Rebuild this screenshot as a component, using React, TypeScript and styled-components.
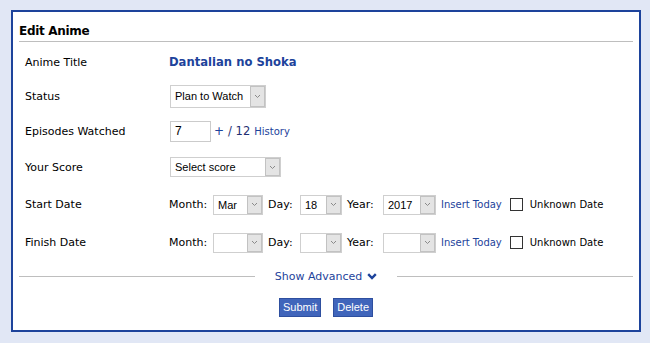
import React from 'react'
import styled, { createGlobalStyle } from 'styled-components'

const GlobalStyle = createGlobalStyle`
  html, body {
    margin: 0;
    padding: 0;
    background: #e1e7f5;
  }
  body {
    font-family: "DejaVu Sans", Verdana, sans-serif;
    color: #000;
  }
`

const Page = styled.div`
  padding: 10px 0 0 11px;
  width: 630px;
`

const Card = styled.div`
  background: #fff;
  border: 2px solid #1d439b;
  width: 614px;
  height: 318px;
  padding: 0 6px;
  box-sizing: content-box;
`

const Header = styled.div`
  font-weight: bold;
  font-size: 12px;
  line-height: 16px;
  padding: 11px 0 2px 0;
  border-bottom: 1px solid #bebebe;
  letter-spacing: -0.3px;
`

const Form = styled.div`
  margin-top: 3px;
  padding-left: 6px;
`

const Row = styled.div<{ $h: number }>`
  display: grid;
  grid-template-columns: 144px 1fr;
  align-items: center;
  height: ${p => p.$h}px;
`

const Label = styled.div`
  font-size: 11px;
`

const Value = styled.div`
  display: flex;
  align-items: center;
  font-size: 11px;
`

const Title = styled.a`
  font-weight: bold;
  font-size: 11.6px;
  color: #1d439b;
  text-decoration: none;
`

const SelectBox = styled.div<{ $w: number; $h: number }>`
  display: flex;
  align-items: stretch;
  box-sizing: border-box;
  width: ${p => p.$w}px;
  height: ${p => p.$h}px;
  border: 1px solid #cfcfcf;
  background: #fff;
  margin-left: 1px;
`

const SelectText = styled.span`
  flex: 1;
  display: flex;
  align-items: center;
  padding-left: 4px;
  font-family: "Liberation Sans", Arial, sans-serif;
  font-size: 11px;
  color: #000;
`

const Arrow = styled.span`
  width: 15px;
  box-sizing: border-box;
  border: 1px solid #c2c2c2;
  background: #e4e4e4;
  display: flex;
  align-items: center;
  justify-content: center;
`

const TextInput = styled.div`
  box-sizing: border-box;
  width: 41px;
  height: 21px;
  border: 1px solid #cbcbcb;
  display: flex;
  align-items: center;
  padding-left: 4px;
  font-family: "Liberation Sans", Arial, sans-serif;
  font-size: 12px;
  margin-left: 1px;
`

const Plus = styled.a`
  color: #1d439b;
  font-size: 12px;
  margin-left: 3px;
  text-decoration: none;
`

const Total = styled.span`
  color: #1f2f72;
  font-size: 11.5px;
  margin-left: 4px;
`

const SmallLink = styled.a<{ $ml?: number }>`
  color: #1d439b;
  font-size: 10px;
  text-decoration: none;
  margin-left: ${p => p.$ml ?? 0}px;
`

const DateLabel = styled.span<{ $w: number }>`
  width: ${p => p.$w}px;
  font-size: 11px;
`

const DateSelect = styled(SelectBox)`
  margin: 0 5px 0 0;
`

const Check = styled.span`
  box-sizing: border-box;
  width: 13px;
  height: 13px;
  border: 1px solid #333;
  background: #fff;
  margin-left: 8px;
`

const CheckLabel = styled.span`
  font-size: 10px;
  margin-left: 7px;
`

const Advanced = styled.div`
  display: flex;
  align-items: center;
  height: 30px;
`

const Line = styled.div`
  flex: 1;
  height: 1px;
  background: #bebebe;
`

const AdvancedLink = styled.a`
  display: flex;
  align-items: center;
  gap: 5px;
  margin: 0 20px;
  color: #1d439b;
  font-size: 11px;
  text-decoration: none;
`

const Buttons = styled.div`
  display: flex;
  justify-content: center;
  gap: 12px;
  margin-top: 7px;
`

const Button = styled.button`
  box-sizing: border-box;
  height: 19px;
  padding: 0 3px;
  border: 1px solid #2e4f9f;
  background: #4065bb;
  color: #fff;
  font-family: "Liberation Sans", Arial, sans-serif;
  font-size: 11px;
  line-height: 17px;
  border-radius: 0;
  cursor: pointer;
`

const Chevron = () => (
  <svg width="7" height="5" viewBox="0 0 7 5">
    <path d="M1 1 L3.5 3.5 L6 1" fill="none" stroke="#8a8a8a" strokeWidth="1" />
  </svg>
)

const BoldChevron = () => (
  <svg width="10" height="7" viewBox="0 0 10 7">
    <path d="M1.2 1.2 L5 5 L8.8 1.2" fill="none" stroke="#1d439b" strokeWidth="2.4" />
  </svg>
)

function Select({ text, w, h }: { text: string; w: number; h: number }) {
  return (
    <SelectBox $w={w} $h={h}>
      <SelectText>{text}</SelectText>
      <Arrow>
        <Chevron />
      </Arrow>
    </SelectBox>
  )
}

function DateFields({ month, day, year }: { month: string; day: string; year: string }) {
  return (
    <Value>
      <DateLabel $w={44}>Month:</DateLabel>
      <DateSelect $w={50} $h={20}>
        <SelectText>{month}</SelectText>
        <Arrow><Chevron /></Arrow>
      </DateSelect>
      <DateLabel $w={32}>Day:</DateLabel>
      <DateSelect $w={42} $h={20}>
        <SelectText>{day}</SelectText>
        <Arrow><Chevron /></Arrow>
      </DateSelect>
      <DateLabel $w={36}>Year:</DateLabel>
      <DateSelect $w={53} $h={20}>
        <SelectText>{year}</SelectText>
        <Arrow><Chevron /></Arrow>
      </DateSelect>
      <SmallLink>Insert Today</SmallLink>
      <Check />
      <CheckLabel>Unknown Date</CheckLabel>
    </Value>
  )
}

export default function App() {
  return (
    <Page>
      <GlobalStyle />
      <Card>
        <Header>Edit Anime</Header>
        <Form>
          <Row $h={34}>
            <Label>Anime Title</Label>
            <Value><Title>Dantalian no Shoka</Title></Value>
          </Row>
          <Row $h={34}>
            <Label>Status</Label>
            <Value><Select text="Plan to Watch" w={96} h={23} /></Value>
          </Row>
          <Row $h={36}>
            <Label>Episodes Watched</Label>
            <Value>
              <TextInput>7</TextInput>
              <Plus>+</Plus>
              <Total>/ 12</Total>
              <SmallLink $ml={4}>History</SmallLink>
            </Value>
          </Row>
          <Row $h={36}>
            <Label>Your Score</Label>
            <Value><Select text="Select score" w={111} h={20} /></Value>
          </Row>
          <Row $h={39}>
            <Label>Start Date</Label>
            <DateFields month="Mar" day="18" year="2017" />
          </Row>
          <Row $h={37}>
            <Label>Finish Date</Label>
            <DateFields month="" day="" year="" />
          </Row>
        </Form>
        <Advanced>
          <Line />
          <AdvancedLink>
            Show Advanced <BoldChevron />
          </AdvancedLink>
          <Line />
        </Advanced>
        <Buttons>
          <Button>Submit</Button>
          <Button>Delete</Button>
        </Buttons>
      </Card>
    </Page>
  )
}
